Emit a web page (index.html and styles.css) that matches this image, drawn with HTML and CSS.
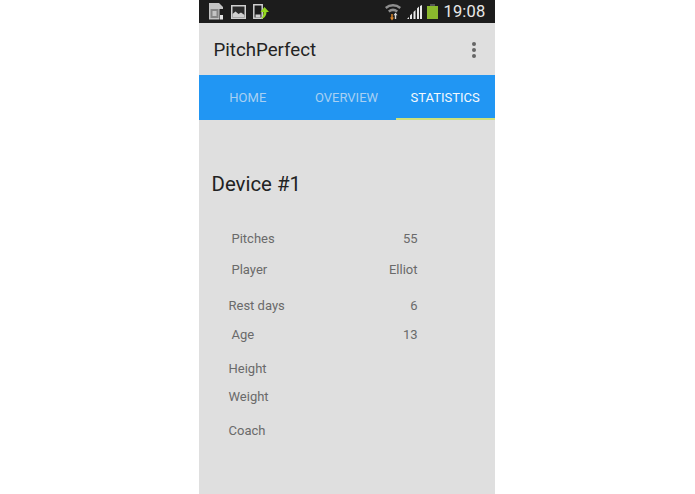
FILE: index.html
```html
<!DOCTYPE html>
<html lang="en">
<head>
<meta charset="utf-8">
<title>PitchPerfect</title>
<link rel="stylesheet" href="styles.css">
</head>
<body>
<main class="phone">
  <header class="status">
    <div class="status-left">
      <svg class="ico" width="15" height="17" viewBox="0 0 15 17"><path d="M0 0h10l4 4v12.500H0z" fill="#c4c4c4"/><rect x="1.500" y="6" width="8" height="9" fill="#868686"/><rect x="3.500" y="8" width="4" height="5" fill="#c4c4c4"/><rect x="10.500" y="6" width="4.500" height="11" fill="#1c1c1c"/><rect x="11" y="12" width="3" height="4.500" fill="#e4e4e4"/></svg>
      <svg class="ico" width="15" height="14" viewBox="0 0 15 14"><rect width="15" height="14" fill="#cfcfcf"/><rect x="1.500" y="1.500" width="12" height="11" fill="#2a2a2a"/><path d="M1.500 12.500V9l3-2.500 3 2.500 2.500-1.500 3.500 2.500v2.500z" fill="#cfcfcf"/></svg>
      <svg class="ico" width="16" height="15" viewBox="0 0 16 15"><path d="M.8.800h8.400v13.400H.8z" fill="none" stroke="#cfcfcf" stroke-width="1.500"/><rect x="2.500" y="10.500" width="5" height="3" fill="#cfcfcf"/><path d="M11.500 3l4.500 5h-2.500c0 3-1.500 6-5.500 7 1.800-2 2.500-4 2.500-7H7.500z" fill="#94d81f"/></svg>
    </div>
    <div class="status-right">
      <svg class="wifi" width="16" height="18" viewBox="0 0 16 18"><path d="M0 4a12 12 0 0 1 16 0l-1.500 2a10 10 0 0 0-13 0z" fill="#8f8f8f"/><path d="M3 7.500a8 8 0 0 1 10 0l-1.500 2a6 6 0 0 0-7 0z" fill="#8f8f8f"/><path d="M6.300 11v3.500H5l2 3 2-3H7.700V11z" fill="#e08a2c"/><path d="M10.500 9.500l2 2.800h-1.300V16H9.800v-3.700H8.500z" fill="#d8d8d8"/></svg>
      <svg class="signal" width="15" height="14" viewBox="0 0 15 14"><path d="M0 14l2-2v2zM3 14V10.500l2-2V14zM6.500 14V7l2-2v9zM10 14V3.500l2-2V14zM13 14V1l2-1v14z" fill="#e8e8e8"/></svg>
      <div class="battery"><span class="battery-cap"></span><span class="battery-body"></span></div>
      <span class="clock">19:08</span>
    </div>
  </header>
  <section class="appbar">
    <h1 class="app-title">PitchPerfect</h1>
    <div class="overflow"><i></i><i></i><i></i></div>
  </section>
  <nav class="tabs">
    <a class="tab">HOME</a>
    <a class="tab">OVERVIEW</a>
    <a class="tab active">STATISTICS</a>
  </nav>
  <section class="content">
    <h2 class="device">Device #1</h2>
    <div class="stat r-pitches"><span class="label">Pitches</span><span class="value">55</span></div>
    <div class="stat r-player"><span class="label">Player</span><span class="value">Elliot</span></div>
    <div class="stat r-rest out"><span class="label">Rest days</span><span class="value">6</span></div>
    <div class="stat r-age"><span class="label">Age</span><span class="value">13</span></div>
    <div class="stat r-height out"><span class="label">Height</span></div>
    <div class="stat r-weight out"><span class="label">Weight</span></div>
    <div class="stat r-coach out"><span class="label">Coach</span></div>
  </section>
</main>
</body>
</html>
```
FILE: styles.css
```css
* { box-sizing: border-box; }
html, body { margin: 0; height: 100%; background: #fff; overflow: hidden; }
body { display: flex; justify-content: center; padding-right: 2px; font-family: Roboto, "Liberation Sans", sans-serif; }
.phone { width: 296px; height: 494px; background: #dfdfdf; display: flex; flex-direction: column; }
.status { height: 23px; background: #1c1c1c; display: flex; justify-content: space-between; align-items: center; padding: 0 9px 0 10px; }
.status-left { display: flex; align-items: center; gap: 7px; }
.ico { flex: none; }
.status-right { display: flex; align-items: center; }
.wifi { margin-right: 6px; }
.signal { margin-right: 5px; }
.battery { width: 11px; height: 15px; display: flex; flex-direction: column; align-items: center; margin-right: 5px; }
.battery-cap { width: 5px; height: 2px; background: #555; }
.battery-body { width: 11px; height: 13px; background: #8ab92d; }
.clock { color: #e8e8e8; font-size: 16.500px; letter-spacing: 0.2px; }
.appbar { height: 52px; display: flex; align-items: center; justify-content: space-between; padding: 1px 19px 0 15px; }
.app-title { margin: 0; font-size: 18.700px; font-weight: 400; color: #232323; }
.overflow { display: flex; flex-direction: column; gap: 2px; }
.overflow i { display: block; width: 4px; height: 4px; border-radius: 50%; background: #666; }
.tabs { height: 45px; background: #2196f3; display: flex; }
.tab { flex: 1; display: flex; align-items: center; justify-content: center; font-size: 13px; color: #a8d0f2; }
.tab.active { color: #f4f9fd; position: relative; }
.tab.active::after { content: ""; position: absolute; left: 0; right: 0; bottom: 0; height: 2px; background: #cfe07a; }
.content { flex: 1; padding: 52px 0 0 13px; }
.device { margin: 0 0 35px; font-size: 20.400px; line-height: 24px; font-weight: 400; color: #222; }
.stat { display: flex; justify-content: space-between; width: 206px; padding-left: 20px; font-size: 13px; line-height: 16px; color: #6a6a6a; }
.stat.out { padding-left: 17px; }
.r-player { margin-top: 15px; }
.r-rest { margin-top: 20px; }
.r-age { margin-top: 13px; }
.r-height { margin-top: 18px; }
.r-weight { margin-top: 12px; }
.r-coach { margin-top: 18px; }
```
